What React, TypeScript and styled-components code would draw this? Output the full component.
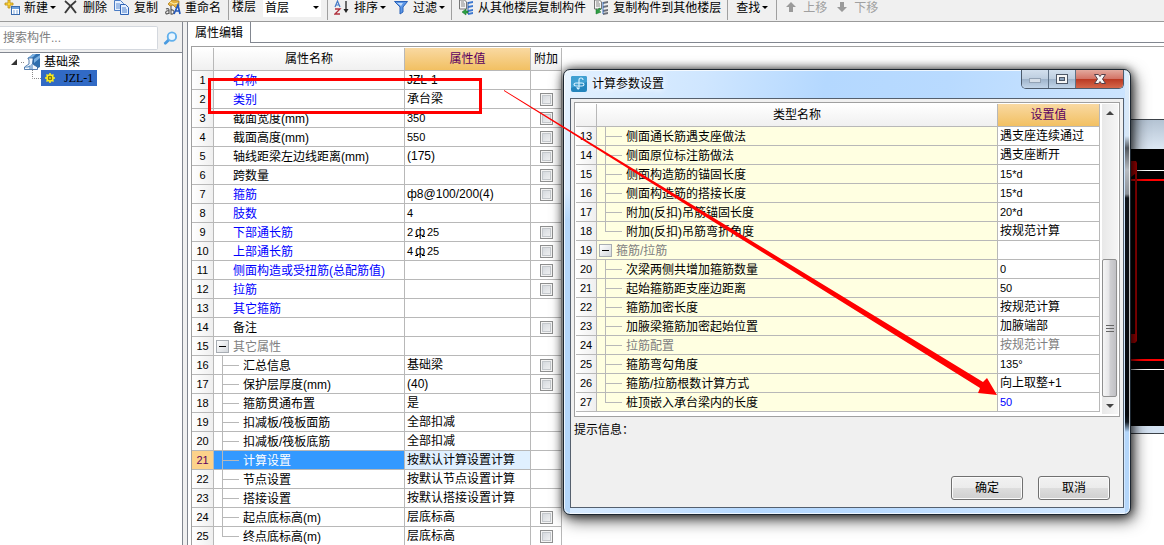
import React from "react";
import styled, { createGlobalStyle, css } from "styled-components";

const GlobalStyle = createGlobalStyle`
  *, *::before, *::after { box-sizing: border-box; }
  body {
    margin: 0;
    background: #fff;
    color: #000;
    font: 12px/16px "Liberation Sans", "Noto Sans CJK SC", sans-serif;
  }
  button, input, select { font: inherit; color: inherit; margin: 0; }
`;

const line = "#b8b8b8";

const Page = styled.div`
  position: relative;
  display: flex;
  flex-direction: column;
  height: 100vh;
  overflow: hidden;
`;

/* ---------- toolbar ---------- */

const Toolbar = styled.div`
  display: flex;
  flex: none;
  gap: 7px;
  height: 22px;
  padding-left: 4px;
  background: #f0f0f0;
  border-bottom: 1px solid #9a9a9a;
  white-space: nowrap;
`;

const ToolButton = styled.button<{ $pad?: boolean }>`
  display: flex;
  align-items: center;
  gap: 4px;
  height: 15px;
  padding: 0 ${(p) => (p.$pad ? 2 : 0)}px;
  border: 0;
  background: none;
  &:disabled { color: #a0a0a0; }
  svg { display: block; flex: none; }
`;

const Caret = styled.span`
  width: 6px;
  margin-left: -2px;
  border: solid transparent;
  border-width: 3px 3px 0;
  border-top-color: #000;
`;

const Separator = styled.span`
  width: 1px;
  height: 20px;
  margin: 0 -1px;
  background: #a0a0a0;
`;

const FloorField = styled.div`
  display: flex;
  gap: 7px;
  height: 20px;
  padding-left: 3px;
  border-left: 1px solid #a0a0a0;
  label { height: 15px; line-height: 15px; }
`;

const FloorSelect = styled.select`
  width: 58px;
  height: 17px;
  padding: 0 0 2px 2px;
  border: 0;
  border-radius: 0;
  appearance: none;
  background: #fff url("data:image/svg+xml,%3Csvg xmlns='http://www.w3.org/2000/svg' width='6' height='3'%3E%3Cpath d='M0 0h6L3 3z'/%3E%3C/svg%3E") no-repeat right 2px top 6px;
`;

const Icon = ({ children, size = 16 }: { children: React.ReactNode; size?: number }) => (
  <svg width={size} height={size} viewBox="0 0 16 16" fill="none" aria-hidden="true">
    {children}
  </svg>
);

const NewIcon = () => (
  <Icon>
    <rect x="7.5" y="6.5" width="8" height="8" fill="#fff" stroke="#3b6cae" />
    <path d="M8 7h7v2H8z" fill="#6fa3e0" />
    <path d="M9 11h2m1 0h2M9 13h2m1 0h2" stroke="#7da7dc" />
    <path d="M4 0h2v3h3v2H6v3H4V5H1V3h3z" fill="#ffd83b" stroke="#b98a12" strokeWidth=".8" />
  </Icon>
);

const DeleteIcon = () => (
  <Icon>
    <path d="M2 1c4 3 8 7 11 12M13 1C9 4 5 8 2 13" stroke="#3a3a3a" strokeWidth="1.8" />
  </Icon>
);

const CopyIcon = () => (
  <Icon>
    <path d="M.5.5h6l3 3v7h-9z" fill="#e5f0ff" stroke="#4b7cc4" />
    <path d="M2 4h4M2 6h5M2 8h5" stroke="#5b8bd0" />
    <path d="M6.500 4.500h5l3 3v7h-8z" fill="#e5f0ff" stroke="#2f62b4" />
    <path d="M8 8h4M8 10h5M8 12h5" stroke="#4e80cc" />
  </Icon>
);

const RenameIcon = () => (
  <Icon>
    <path d="M3 4l4-4 7 1v5l-3 2-3-3-3 1z" fill="#e5b23d" stroke="#a87613" strokeWidth=".7" />
    <path d="M5 2l4 2 4-1" stroke="#fff1b5" />
    <path d="M1 9c2-1 3 0 3 1v4M4 11c-4-1-4 3-2 3l2-1M6 6v8c4 1 4-5 0-4" stroke="#555" strokeWidth="1.100" />
    <path d="M9 14l4-9 2 9M10.500 11H15" stroke="#2459bb" strokeWidth="1.700" />
  </Icon>
);

const SortIcon = () => (
  <Icon>
    <path d="M1 7l2.500-6L6 7M2 5h3" stroke="#4479c6" strokeWidth="1.200" />
    <path d="M1 9h5l-5 5h5" stroke="#b0303c" strokeWidth="1.300" />
    <path d="M12 1v10" stroke="#222" strokeWidth="1.300" />
    <path d="M9.500 9h5L12 13z" fill="#222" />
  </Icon>
);

const FilterIcon = () => (
  <Icon>
    <path d="M1.500 1.500h13L10 7v5l-3 2V7z" fill="#5b96e6" stroke="#2b62b8" />
    <path d="M4 3h6L8 6z" fill="#c3dcfb" />
  </Icon>
);

const FloorCopyIcon = ({ back }: { back?: boolean }) => (
  <Icon>
    <path d="M1.500 0h5l2 2v7h-7z" fill="#f4f4f4" stroke="#777" />
    <path d="M3 2h3M3 4h4M3 6h4" stroke="#888" />
    <path d="M10 2l5-1v2l-5 1zM10 6l5-1v2l-5 1zM10 10l5-1v2l-5 1zM10 13l5-1v2l-5 1z" fill={back ? "#6c7078" : "#3d78cf"} />
    <path d="M10 2v12" stroke={back ? "#3f72c0" : "#2c5ca8"} />
    <path d={back ? "M3 9v5l5-2-2-1 2-2-2-1-1 2z" : "M4 12l4-3v2h2v2H8v2z"} fill="#2ea043" stroke="#17702a" strokeWidth=".5" />
  </Icon>
);

const MoveIcon = ({ down }: { down?: boolean }) => (
  <Icon>
    <path d={down ? "M6 2h4v5h3l-5 5-5-5h3z" : "M6 12h4V7h3L8 2 3 7h3z"} fill="#9a9a9a" />
  </Icon>
);

/* ---------- body ---------- */

const Body = styled.div`
  display: flex;
  flex: 1;
  min-height: 0;
  background: #f0f0f0;
`;

const Sidebar = styled.aside`
  display: flex;
  flex-direction: column;
  flex: none;
  width: 183px;
  margin-right: 4px;
  border-right: 1px solid #828790;
`;

const SearchRow = styled.form`
  display: flex;
  align-items: flex-end;
  height: 30px;
  padding-bottom: 2px;
`;

const SearchInput = styled.input`
  width: 158px;
  height: 24px;
  padding: 0 3px;
  border: 1px solid #d4d8de;
  border-left: 0;
  border-radius: 0 2px 2px 0;
  background: #fff;
  outline: 0;
  &::placeholder { color: #808080; opacity: 1; }
`;

const SearchButton = styled.button`
  display: grid;
  place-items: center;
  flex: 1;
  height: 24px;
  padding: 0;
  border: 0;
  background: none;
`;

const Tree = styled.ul`
  flex: 1;
  margin: 0;
  padding: 1px 0 0 10px;
  list-style: none;
  background: #fff;
  border-top: 1px solid #828790;
`;

const TreeItem = styled.li`
  display: flex;
  align-items: center;
  height: 16px;
  svg { flex: none; }
`;

const TreeLabel = styled.span`
  padding-left: 4px;
`;

const SelectedNode = styled.span`
  display: flex;
  align-items: center;
  gap: 7px;
  height: 16px;
  padding: 0 4px 0 2px;
  background: #316ac5;
  font-family: "Liberation Serif", "Noto Sans CJK SC", serif;
`;

const Main = styled.main`
  display: flex;
  flex-direction: column;
  flex: 1;
  min-width: 0;
  background: #fff;
  border-left: 1px solid #828790;
`;

const TabBar = styled.div`
  display: flex;
  flex: none;
  height: 21px;
  &::after {
    content: "";
    flex: 1;
    border-bottom: 1px solid #828790;
  }
`;

const Tab = styled.button`
  width: 63px;
  padding: 0;
  border: 0;
  border-right: 1px solid #828790;
  background: #fff;
`;

const GridFrame = styled.div`
  flex: 1;
  min-height: 0;
  overflow: hidden;
  margin: 3px 0 0 3px;
  padding-top: 1px;
  border: solid #a0a0a0;
  border-width: 1px 0 0 1px;
`;

/* ---------- grids ---------- */

const Grid = styled.table<{ $full?: boolean }>`
  width: ${(p) => (p.$full ? "100%" : "370px")};
  table-layout: fixed;
  border-collapse: separate;
  border-spacing: 0;
`;

const Col = styled.col<{ $w?: number }>`
  ${(p) => p.$w && `width: ${p.$w}px;`}
`;

const Head = styled.th<{ $accent?: boolean }>`
  height: 23px;
  padding: 0;
  font-weight: 400;
  white-space: nowrap;
  border: solid ${line};
  border-width: 0 1px 1px 0;
  background: linear-gradient(#fff, #f0f0f0);
  ${(p) => p.$accent && css`
    color: #5a0060;
    background: linear-gradient(#f9d9a2, #f2c062);
  `}
`;

const Cell = styled.td<{ $tone?: "tree" | "picked" | "soft" }>`
  height: 19px;
  padding: 0;
  white-space: nowrap;
  border: solid ${line};
  border-width: 0 1px 1px 0;
  background: ${(p) =>
    p.$tone === "tree" ? "#ffffe1" : p.$tone === "picked" ? "#3399ff" : p.$tone === "soft" ? "#e0f0ff" : "#fff"};
`;

const NumberCell = styled(Cell).attrs({ as: "th", scope: "row" })<{ $active?: boolean }>`
  font-size: 11px;
  font-weight: 400;
  text-align: center;
  line-height: 18px;
  background: ${(p) => (p.$active ? "#fcd28a" : "linear-gradient(90deg, #fff, #efefef)")};
  color: ${(p) => (p.$active ? "#5a0060" : "#000")};
`;

const CellBody = styled.div<{ $color?: string }>`
  display: flex;
  align-items: center;
  height: 18px;
  color: ${(p) => p.$color ?? "#000"};
`;

const NameBody = styled(CellBody)<{ $inset?: boolean }>`
  padding-left: ${(p) => (p.$inset ? 19 : 0)}px;
`;

const NameText = styled.span`
  padding-top: 2px;
`;

const ValueBody = styled(CellBody)<{ $small?: boolean }>`
  padding-left: 2px;
  font-size: ${(p) => (p.$small ? 11 : 12)}px;
`;

/* hot-rolled bar sign: a barred phi */
const BarSign = styled.span`
  margin: 0 2px;
  font-size: 12px;
  line-height: 12px;
  text-decoration: underline;
  text-underline-offset: 0;
`;

const Branch = styled.span<{ $last?: boolean }>`
  flex: none;
  align-self: stretch;
  width: 17px;
  margin: 0 4px 0 8px;
  background:
    linear-gradient(${line}, ${line}) 0 0 / 1px ${(p) => (p.$last ? "50%" : "100%")} no-repeat,
    linear-gradient(${line}, ${line}) 0 50% / 100% 1px no-repeat;
`;

const Toggle = styled.button`
  display: grid;
  place-items: center;
  flex: none;
  width: 13px;
  height: 13px;
  margin: 0 4px 0 2px;
  padding: 0;
  border: 1px solid #a8adb3;
  background: linear-gradient(135deg, #fff, #d3d7dc);
  &::before {
    content: "";
    width: 7px;
    height: 1px;
    background: #000;
  }
`;

const Check = styled.input.attrs({ type: "checkbox" })`
  display: block;
  width: 13px;
  height: 13px;
  margin: 3px auto 2px;
  appearance: none;
  border: 1px solid #8e8f8f;
  background: linear-gradient(135deg, #cdd2d8, #f8f8f8);
  box-shadow: inset 0 0 0 1px #f4f4f4, inset 0 0 0 2px #c4c8cc;
`;

type Kind = "top" | "group" | "child" | "last";
type Row = {
  no: number;
  name: string;
  value?: string;
  bar?: [string, string];
  kind?: Kind;
  color?: string;
  valueColor?: string;
  check?: boolean;
};

const blue = "#0000ff";
const gray = "#808080";

const properties: Row[] = [
  { no: 1, name: "名称", value: "JZL-1", color: blue },
  { no: 2, name: "类别", value: "承台梁", color: blue, check: true },
  { no: 3, name: "截面宽度(mm)", value: "350", check: true },
  { no: 4, name: "截面高度(mm)", value: "550", check: true },
  { no: 5, name: "轴线距梁左边线距离(mm)", value: "(175)", check: true },
  { no: 6, name: "跨数量", check: true },
  { no: 7, name: "箍筋", value: "ф8@100/200(4)", color: blue, check: true },
  { no: 8, name: "肢数", value: "4", color: blue },
  { no: 9, name: "下部通长筋", bar: ["2", "25"], color: blue, check: true },
  { no: 10, name: "上部通长筋", bar: ["4", "25"], color: blue, check: true },
  { no: 11, name: "侧面构造或受扭筋(总配筋值)", color: blue, check: true },
  { no: 12, name: "拉筋", color: blue, check: true },
  { no: 13, name: "其它箍筋", color: blue },
  { no: 14, name: "备注", check: true },
  { no: 15, name: "其它属性", kind: "group", color: gray },
  { no: 16, name: "汇总信息", value: "基础梁", kind: "child", check: true },
  { no: 17, name: "保护层厚度(mm)", value: "(40)", kind: "child", check: true },
  { no: 18, name: "箍筋贯通布置", value: "是", kind: "child" },
  { no: 19, name: "扣减板/筏板面筋", value: "全部扣减", kind: "child" },
  { no: 20, name: "扣减板/筏板底筋", value: "全部扣减", kind: "child" },
  { no: 21, name: "计算设置", value: "按默认计算设置计算", kind: "child" },
  { no: 22, name: "节点设置", value: "按默认节点设置计算", kind: "child" },
  { no: 23, name: "搭接设置", value: "按默认搭接设置计算", kind: "child" },
  { no: 24, name: "起点底标高(m)", value: "层底标高", kind: "child", check: true },
  { no: 25, name: "终点底标高(m)", value: "层底标高", kind: "last", check: true },
];

const settings: Row[] = [
  { no: 13, name: "侧面通长筋遇支座做法", value: "遇支座连续通过", kind: "child" },
  { no: 14, name: "侧面原位标注筋做法", value: "遇支座断开", kind: "child" },
  { no: 15, name: "侧面构造筋的锚固长度", value: "15*d", kind: "child" },
  { no: 16, name: "侧面构造筋的搭接长度", value: "15*d", kind: "child" },
  { no: 17, name: "附加(反扣)吊筋锚固长度", value: "20*d", kind: "child" },
  { no: 18, name: "附加(反扣)吊筋弯折角度", value: "按规范计算", kind: "last" },
  { no: 19, name: "箍筋/拉筋", kind: "group", color: gray },
  { no: 20, name: "次梁两侧共增加箍筋数量", value: "0", kind: "child" },
  { no: 21, name: "起始箍筋距支座边距离", value: "50", kind: "child" },
  { no: 22, name: "箍筋加密长度", value: "按规范计算", kind: "child" },
  { no: 23, name: "加腋梁箍筋加密起始位置", value: "加腋端部", kind: "child" },
  { no: 24, name: "拉筋配置", value: "按规范计算", kind: "child", color: gray, valueColor: gray },
  { no: 25, name: "箍筋弯勾角度", value: "135°", kind: "child" },
  { no: 26, name: "箍筋/拉筋根数计算方式", value: "向上取整+1", kind: "child" },
  { no: 27, name: "桩顶嵌入承台梁内的长度", value: "50", kind: "last", valueColor: blue },
];

const isNumeric = (text?: string) => !!text && /^[\d*d°]+$/.test(text);

const NameContent = ({ row, color }: { row: Row; color?: string }) => {
  const kind = row.kind ?? "top";
  return (
    <NameBody $color={color ?? row.color} $inset={kind === "top"}>
      {kind === "group" && <Toggle type="button" aria-label={`折叠${row.name}`} />}
      {(kind === "child" || kind === "last") && <Branch $last={kind === "last"} />}
      <NameText>{row.name}</NameText>
    </NameBody>
  );
};

const ValueContent = ({ row }: { row: Row }) => (
  <ValueBody $small={!!row.bar || isNumeric(row.value)} $color={row.valueColor}>
    {row.bar ? <>{row.bar[0]}<BarSign>ф</BarSign>{row.bar[1]}</> : row.value}
  </ValueBody>
);

/* ---------- drawing window behind the dialog ---------- */

const CadWindow = styled.section`
  position: absolute;
  top: 119px;
  right: 0;
  width: 60px;
  padding: 29px 0 7px;
  border: solid #3c4248;
  border-width: 1px 0;
  background: linear-gradient(#b4c3d3, #dbe6f2 28px, #d4e2f2);
  svg { display: block; width: 100%; background: #000; }
`;

/* ---------- dialog ---------- */

const Dialog = styled.section`
  position: absolute;
  top: 69px;
  left: 563px;
  width: 568px;
  padding: 0 6px 6px;
  border: 1px solid #1c2630;
  border-radius: 7px;
  background:
    linear-gradient(#dcecfb 0, #d6e6f6 66px, #50555c 78px, #b8bcc2 100px, #8b9097 124px, #10141a 128px, #04060a 345px, #101820 352px, #b4d6fa 362px) right top / 5px 100% no-repeat,
    linear-gradient(#e8f4ff, #d8ebff 120px, #b4d6fa 150px) left top / 6px 100% no-repeat,
    linear-gradient(100deg, #e2f1ff 0, #cfe6ff 140px, #b4d8ff 260px, #b8daff 60%, #d4e9ff) #b4d6fa;
  box-shadow: inset 0 0 0 1px rgba(255, 255, 255, 0.75), 0 0 10px rgba(0, 0, 0, 0.7), 3px 5px 16px rgba(0, 0, 0, 0.7);
`;

const TitleBar = styled.header`
  display: flex;
  align-items: center;
  gap: 5px;
  height: 28px;
  padding-left: 1px;
  h2 {
    flex: 1;
    margin: 0;
    font-size: 12px;
    font-weight: 400;
    text-shadow: 0 0 6px #fff, 0 0 8px #fff;
  }
`;

const WindowButtons = styled.div`
  display: flex;
  align-self: flex-start;
  border: solid #4c5b6c;
  border-width: 0 1px 1px;
  border-radius: 0 0 5px 5px;
  overflow: hidden;
`;

const WindowButton = styled.button<{ $close?: boolean }>`
  display: grid;
  place-items: center;
  width: ${(p) => (p.$close ? 47 : 27)}px;
  height: 18px;
  padding: 0;
  border: 0;
  border-right: 1px solid #5f7286;
  background: linear-gradient(#d3e0ee, #bccddf 50%, #9fb4cb 52%, #c2d5e9);
  ${(p) => p.$close && css`
    border-right: 0;
    background: linear-gradient(#e3a99e, #d37264 50%, #bb3a24 52%, #d5674a);
  `}
`;

const Client = styled.div`
  padding: 3px;
  border: 1px solid #55606e;
  background: #f0f0f0;
`;

const SettingsFrame = styled.div`
  display: flex;
  gap: 2px;
  padding: 1px 1px 2px;
  border: 1px solid #a0a0a0;
  background: #fff;
`;

const TableArea = styled.div`
  flex: 1;
  padding-bottom: 2px;
`;

const Scrollbar = styled.div`
  display: flex;
  flex-direction: column;
  flex: none;
  width: 16px;
  background: linear-gradient(90deg, #e8e8e8, #f6f6f6);
`;

const ScrollArrow = styled.button<{ $down?: boolean }>`
  display: grid;
  place-items: center;
  height: 17px;
  padding: 0;
  border: 0;
  background: none;
  &::before {
    content: "";
    border: solid transparent;
    border-width: ${(p) => (p.$down ? "4px 4px 0" : "0 4px 4px")};
    border-top-color: #444;
    border-bottom-color: #444;
  }
`;

const ScrollTrack = styled.div`
  display: flex;
  align-items: flex-end;
  flex: 1;
`;

const ScrollThumb = styled.div`
  display: grid;
  place-items: center;
  width: 15px;
  height: 50%;
  border: 1px solid #8f8f8f;
  border-radius: 2px;
  background: linear-gradient(90deg, #f6f6f6, #e6e6e8 45%, #cfcfd2 55%, #c0c0c4);
`;

const Hint = styled.p`
  min-height: 59px;
  margin: 0;
  padding: 5px 0;
`;

const Actions = styled.footer`
  display: flex;
  justify-content: flex-end;
  gap: 15px;
  padding: 0 10px 4px 0;
`;

const ActionButton = styled.button`
  width: 72px;
  height: 24px;
  padding: 0;
  border: 1px solid #707070;
  border-radius: 3px;
  background: linear-gradient(#f2f2f2, #ebebeb 50%, #dddddd 50%, #cfcfcf);
  box-shadow: inset 0 0 0 1px #fbfbfb;
`;

/* ---------- annotations ---------- */

const HighlightBox = styled.div`
  position: absolute;
  top: 78px;
  left: 208px;
  width: 274px;
  height: 36px;
  border: 3px solid #f00;
  pointer-events: none;
`;

const ArrowMark = styled.svg`
  position: absolute;
  top: 90px;
  left: 504px;
  pointer-events: none;
`;

const PropertyGrid = () => (
  <Grid>
    <colgroup>
      <Col $w={22} />
      <Col $w={191} />
      <Col $w={126} />
      <Col $w={31} />
    </colgroup>
    <thead>
      <tr>
        <Head />
        <Head>属性名称</Head>
        <Head $accent>属性值</Head>
        <Head>附加</Head>
      </tr>
    </thead>
    <tbody>
      {properties.map((row) => {
        const active = row.no === 21;
        return (
          <tr key={row.no}>
            <NumberCell $active={active}>{row.no}</NumberCell>
            <Cell $tone={active ? "picked" : undefined}>
              <NameContent row={row} color={active ? "#fff" : undefined} />
            </Cell>
            <Cell $tone={active ? "soft" : undefined}>
              <ValueContent row={row} />
            </Cell>
            <Cell>{row.check && <Check aria-label={`附加${row.name}`} />}</Cell>
          </tr>
        );
      })}
    </tbody>
  </Grid>
);

const SettingsGrid = () => (
  <Grid $full>
    <colgroup>
      <Col $w={21} />
      <Col />
      <Col $w={102} />
    </colgroup>
    <thead>
      <tr>
        <Head />
        <Head>类型名称</Head>
        <Head $accent>设置值</Head>
      </tr>
    </thead>
    <tbody>
      {settings.map((row) => (
        <tr key={row.no}>
          <NumberCell>{row.no}</NumberCell>
          <Cell $tone="tree">
            <NameContent row={row} />
          </Cell>
          <Cell>
            <ValueContent row={row} />
          </Cell>
        </tr>
      ))}
    </tbody>
  </Grid>
);

export default function App() {
  return (
    <Page>
      <GlobalStyle />
      <Toolbar role="toolbar">
        <ToolButton><NewIcon />新建<Caret /></ToolButton>
        <ToolButton><DeleteIcon />删除</ToolButton>
        <ToolButton><CopyIcon />复制</ToolButton>
        <ToolButton><RenameIcon />重命名</ToolButton>
        <FloorField>
          <label htmlFor="floor">楼层</label>
          <FloorSelect id="floor"><option>首层</option></FloorSelect>
        </FloorField>
        <Separator />
        <ToolButton><SortIcon />排序<Caret /></ToolButton>
        <ToolButton><FilterIcon />过滤<Caret /></ToolButton>
        <Separator />
        <ToolButton><FloorCopyIcon />从其他楼层复制构件</ToolButton>
        <ToolButton><FloorCopyIcon back />复制构件到其他楼层</ToolButton>
        <Separator />
        <ToolButton $pad>查找<Caret /></ToolButton>
        <Separator />
        <ToolButton disabled><MoveIcon />上移</ToolButton>
        <ToolButton disabled><MoveIcon down />下移</ToolButton>
      </Toolbar>

      <Body>
        <Sidebar>
          <SearchRow>
            <SearchInput aria-label="搜索构件" placeholder="搜索构件..." />
            <SearchButton type="button" aria-label="搜索">
              <Icon size={15}>
                <path d="M6 9.500L2.500 13" stroke="#4a9be0" strokeWidth="3" strokeLinecap="round" />
                <circle cx="9.500" cy="6" r="4.500" fill="#eaf6ff" stroke="#62b0ec" strokeWidth="2" />
              </Icon>
            </SearchButton>
          </SearchRow>
          <Tree>
            <TreeItem>
              <svg width="14" height="16" viewBox="0 0 14 16" aria-hidden="true">
                <path d="M7 5v6H1z" fill="#333" />
                <path d="M11 8.500h3" stroke="#888" strokeDasharray="1 1" />
              </svg>
              <Icon>
                <path d="M4 4l5-4h7v13l-4 2-3-5z" fill="#2f6fae" />
                <path d="M4 4l5-4h3L8 4zM10 5l6-4v3l-6 5z" fill="#7db2e2" />
                <path d="M4 4h5v1.500L8.500 10l5 3v2.500h-13V13L5 10V5.500L4 5z" fill="#f3f8fd" stroke="#2d609b" strokeWidth=".8" />
                <path d="M1 13h3l2-1v3M8 10v5" stroke="#5d8fc4" strokeWidth="1.200" />
              </Icon>
              <TreeLabel>基础梁</TreeLabel>
            </TreeItem>
            <TreeItem>
              <svg width="31" height="16" viewBox="0 0 31 16" fill="none" aria-hidden="true">
                <path d="M22.500 0v8.500H31" stroke="#888" strokeDasharray="1 1" />
              </svg>
              <SelectedNode>
                <svg width="14" height="14" viewBox="0 0 14 14" fill="none" aria-hidden="true">
                  <path d="M7 2v10M2 7h10M3.500 3.500l7 7M10.500 3.500l-7 7" stroke="#ffee1a" strokeWidth="1.500" />
                  <circle cx="7" cy="7" r="3" fill="#55550f" stroke="#ffee1a" strokeWidth="1.500" />
                  <path d="M7 5.500v3M5.500 7h3" stroke="#ffee1a" />
                </svg>
                JZL-1
              </SelectedNode>
            </TreeItem>
          </Tree>
        </Sidebar>

        <Main>
          <TabBar><Tab type="button">属性编辑</Tab></TabBar>
          <GridFrame><PropertyGrid /></GridFrame>
        </Main>
      </Body>

      <CadWindow aria-hidden="true">
        <svg height="277" viewBox="0 0 60 277" fill="none">
          <path d="M0 21.500h60M0 220.500h60" stroke="#fff" />
          <path d="M0 31h60M0 211h60" stroke="#f00" strokeWidth="2" />
          <path d="M32 14v178" stroke="#b00000" strokeWidth="2" />
          <path d="M24 12h8l1 2v11h-2l-4 3h-3zM24 185h9v7l-2 2h-7z" fill="#b80000" />
        </svg>
      </CadWindow>

      <Dialog role="dialog" aria-labelledby="dialog-title">
        <TitleBar>
          <Icon>
            <rect width="16" height="16" rx="2" fill="#2485bd" />
            <path d="M0 2q0-2 2-2h12q2 0 2 2v4L0 12z" fill="#3fa0d2" />
            <path d="M8 13V4q0-2 2-2t2 2M3 9q0-2 2-2h6q2 0 2 1.500T11 10H5Q3 10 3 8.500M8 13q-2 0-2-2" stroke="#d9f2ff" strokeWidth="1.100" />
          </Icon>
          <h2 id="dialog-title">计算参数设置</h2>
          <WindowButtons>
            <WindowButton aria-label="最小化">
              <svg width="14" height="10" viewBox="0 0 14 10"><rect x="1.500" y="4.500" width="11" height="4" fill="#d5dee8" stroke="#93a3b5" /></svg>
            </WindowButton>
            <WindowButton aria-label="最大化">
              <svg width="14" height="12" viewBox="0 0 14 12" fill="none">
                <rect x="1.500" y="1.500" width="11" height="9" fill="#f6f6f6" stroke="#4d5766" />
                <rect x="4.500" y="4.500" width="5" height="3" fill="#8ea3bb" stroke="#4d5766" />
              </svg>
            </WindowButton>
            <WindowButton $close aria-label="关闭">
              <svg width="14" height="12" viewBox="0 0 14 12">
                <path d="M1.500 1.500h4L7 3.500l1.500-2h4L9.500 6l3 4.500h-4L7 8.500l-1.500 2h-4L4.500 6z" fill="#f6f6f6" stroke="#55404a" />
              </svg>
            </WindowButton>
          </WindowButtons>
        </TitleBar>
        <Client>
          <SettingsFrame>
            <TableArea><SettingsGrid /></TableArea>
            <Scrollbar>
              <ScrollArrow type="button" aria-label="向上滚动" />
              <ScrollTrack>
                <ScrollThumb>
                  <svg width="8" height="9" viewBox="0 0 8 9" aria-hidden="true">
                    <path d="M0 1.500h8M0 4.500h8M0 7.500h8" stroke="#666" />
                  </svg>
                </ScrollThumb>
              </ScrollTrack>
              <ScrollArrow type="button" $down aria-label="向下滚动" />
            </Scrollbar>
          </SettingsFrame>
          <Hint>提示信息：</Hint>
          <Actions>
            <ActionButton type="button">确定</ActionButton>
            <ActionButton type="button">取消</ActionButton>
          </Actions>
        </Client>
      </Dialog>

      <HighlightBox />
      <ArrowMark width="494" height="306" viewBox="0 0 494 306" aria-hidden="true">
        <path d="M0 0L479 292l4-4 10 17-19-2 2-5L0 1z" fill="#f00" />
      </ArrowMark>
    </Page>
  );
}
